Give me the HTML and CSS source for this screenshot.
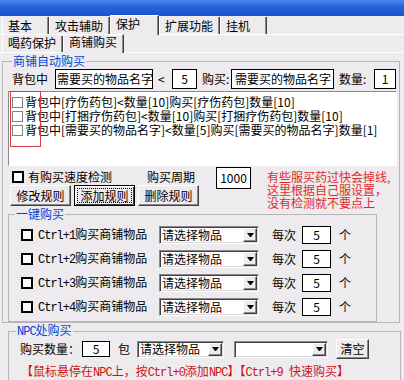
FILE: index.html
```html
<!DOCTYPE html>
<html>
  <head>
    <title>商铺购买</title>
    <link rel="stylesheet" href="styles.css">
  </head>
  <body>
    <div class="caption"></div>
    <div class="tabbar outer-tabs">
      <div class="tab">基本</div>
      <div class="tab">攻击辅助</div>
      <div class="tab active">保护</div>
      <div class="tab">扩展功能</div>
      <div class="tab">挂机</div>
    </div>
    <div class="page">
      <div class="tabbar inner-tabs">
        <div class="tab">喝药保护</div>
        <div class="tab active">商铺购买</div>
      </div>
      <div class="panel">
        <fieldset class="group shop-group">
          <legend>商铺自动购买</legend>
          <div class="rule-row">
            <span class="lbl-bag">背包中</span>
            <span class="field f-name">需要买的物品名字</span>
            <span class="lbl-lt">&lt;</span>
            <span class="field f-small center">5</span>
            <span class="lbl-buy">购买:</span>
            <span class="field f-name2">需要买的物品名字</span>
            <span class="lbl-num">数量:</span>
            <span class="field f-qty center">1</span>
          </div>
          <div class="rule-list">
            <div class="rule-item"><span class="check"></span>背包中[疗伤药包]&lt;数量[10]购买[疗伤药包]数量[10]</div>
            <div class="rule-item"><span class="check"></span>背包中[打捆疗伤药包]&lt;数量[10]购买[打捆疗伤药包]数量[10]</div>
            <div class="rule-item"><span class="check"></span>背包中[需要买的物品名字]&lt;数量[5]购买[需要买的物品名字]数量[1]</div>
            <div class="mark"></div>
          </div>
          <div class="opts">
            <div class="opts-left">
              <div class="speed-row">
                <span class="check bold"></span>
                <span class="speed-lbl">有购买速度检测</span>
                <span class="cycle-lbl">购买周期</span>
                <span class="field f-cycle center">1000</span>
              </div>
              <div class="btn-row">
                <button class="btn">修改规则</button>
                <button class="btn default">添加规则</button>
                <button class="btn">删除规则</button>
              </div>
            </div>
            <div class="warn">有些服买药过快会掉线,<br>这里根据自己服设置，<br>没有检测就不要点上</div>
          </div>
          <fieldset class="group quick-group">
            <legend>一键购买</legend>
            <div class="quick-row">
              <span class="check bold"></span>
              <span class="quick-lbl"><span class="en">Ctrl+1</span>购买商铺物品</span>
              <div class="combo q-combo"><span class="combo-text">请选择物品</span><span class="combo-arrow"></span></div>
              <span class="each-lbl">每次</span>
              <span class="field f-each center">5</span>
              <span class="unit">个</span>
            </div>
            <div class="quick-row">
              <span class="check bold"></span>
              <span class="quick-lbl"><span class="en">Ctrl+2</span>购买商铺物品</span>
              <div class="combo q-combo"><span class="combo-text">请选择物品</span><span class="combo-arrow"></span></div>
              <span class="each-lbl">每次</span>
              <span class="field f-each center">5</span>
              <span class="unit">个</span>
            </div>
            <div class="quick-row">
              <span class="check bold"></span>
              <span class="quick-lbl"><span class="en">Ctrl+3</span>购买商铺物品</span>
              <div class="combo q-combo"><span class="combo-text">请选择物品</span><span class="combo-arrow"></span></div>
              <span class="each-lbl">每次</span>
              <span class="field f-each center">5</span>
              <span class="unit">个</span>
            </div>
            <div class="quick-row">
              <span class="check bold"></span>
              <span class="quick-lbl"><span class="en">Ctrl+4</span>购买商铺物品</span>
              <div class="combo q-combo"><span class="combo-text">请选择物品</span><span class="combo-arrow"></span></div>
              <span class="each-lbl">每次</span>
              <span class="field f-each center">5</span>
              <span class="unit">个</span>
            </div>
          </fieldset>
        </fieldset>
        <fieldset class="group npc-group">
          <legend><span class="en">NPC</span>处购买</legend>
          <div class="npc-row">
            <span class="npc-lbl">购买数量：</span>
            <span class="field f-npc center">5</span>
            <span class="pack">包</span>
            <div class="combo npc-combo"><span class="combo-text">请选择物品</span><span class="combo-arrow"></span></div>
            <div class="combo npc-combo2"><span class="combo-text"></span><span class="combo-arrow"></span></div>
            <button class="btn btn-clear">清空</button>
          </div>
          <div class="tip">【鼠标悬停在<span class="en">NPC</span>上，按<span class="en">Ctrl+0</span>添加<span class="en">NPC</span>】【<span class="en">Ctrl+9 </span>快速购买】</div>
        </fieldset>
      </div>
    </div>
  </body>
</html>
```

FILE: styles.css
```css
* {
  box-sizing: border-box;
}
body {
  margin: 0;
  width: 404px;
  height: 380px;
  overflow: hidden;
  background-color: #eeebee;
  color: #000;
  font-family: "Noto Sans CJK SC", sans-serif;
  font-size: 12px;
  line-height: 14px;
}
.en {
  font-family: "Liberation Mono", monospace;
  font-size: 12px;
  letter-spacing: -1px;
}
.caption {
  height: 16px;
  background: linear-gradient(#4687ee, #2462d8 45%, #1b54c8);
}

/* tabs */
.tabbar {
  display: flex;
  align-items: flex-end;
  padding-left: 2px;
}
.outer-tabs {
  height: 18px;
}
.inner-tabs {
  height: 17px;
}
.tab {
  min-width: 47px;
  padding: 0 6px 0 5px;
  border-left: 1px solid #fff;
  border-right: 1px solid #404040;
  box-shadow: inset -1px 0 0 #8c888c;
  white-space: nowrap;
}
.outer-tabs .tab {
  height: 17px;
  line-height: 17px;
}
.inner-tabs .tab {
  height: 16px;
  line-height: 14px;
}
.tab.active {
  position: relative;
  z-index: 1;
  margin-bottom: -1px;
  border-top: 1px solid #fff;
  background-color: #eeebee;
}
.outer-tabs .tab.active {
  height: 20px;
  line-height: 15px;
  min-width: 49px;
}
.inner-tabs .tab.active {
  height: 19px;
  line-height: 13px;
}
.page {
  border-top: 1px solid #fff;
}
.panel {
  border-top: 1px solid #fff;
  padding-top: 1px;
}

/* group boxes */
.group {
  margin: 0;
  padding: 0;
  min-width: 0;
  border: 1px solid #b8b4b8;
}
.group legend {
  padding: 0 1px;
  line-height: 14px;
  color: #0046d5;
}
.shop-group {
  margin-left: 2px;
  width: 398px;
}
.shop-group > legend {
  margin-left: 9px;
}

/* inputs */
.field {
  display: flex;
  align-items: center;
  flex: none;
  height: 20px;
  padding-left: 1px;
  border: 1px solid #000;
  background-color: #fff;
  white-space: nowrap;
}
.field.center {
  justify-content: center;
  padding-left: 0;
}
.check {
  flex: none;
  width: 11px;
  height: 11px;
  border: 1px solid #808080;
  background-color: #fff;
}
.check.bold {
  width: 12px;
  height: 12px;
  border: 2px solid #000;
}
.combo {
  display: flex;
  align-items: center;
  flex: none;
  height: 18px;
  padding: 0 1px;
  background-color: #fff;
  border: 1px solid;
  border-color: #8c888c #fff #fff #8c888c;
  box-shadow: inset 1px 1px 0 #404040, inset -1px -1px 0 #dedade;
}
.combo-text {
  flex: 1;
  padding-left: 1px;
  white-space: nowrap;
}
.combo-arrow {
  display: flex;
  align-items: center;
  justify-content: center;
  flex: none;
  width: 14px;
  height: 14px;
  background-color: #eeebee;
  border: 1px solid;
  border-color: #fff #404040 #404040 #fff;
  box-shadow: inset -1px -1px 0 #8c888c;
}
.combo-arrow::after {
  content: "";
  width: 1px;
  border-top: 4px solid #000;
  border-left: 3px solid transparent;
  border-right: 3px solid transparent;
}
.btn {
  flex: none;
  height: 21px;
  width: 61px;
  padding: 0;
  font: inherit;
  color: #000;
  background-color: #eeebee;
  border: 1px solid;
  border-color: #fff #404040 #404040 #fff;
  box-shadow: inset -1px -1px 0 #8c888c;
}
.btn.default {
  border-color: #000;
  box-shadow: inset 1px 1px 0 #fff, inset -1px -1px 0 #404040;
  outline: 1px dotted #000;
  outline-offset: -4px;
}

/* shop rules */
.rule-row {
  display: flex;
  align-items: center;
  height: 20px;
  margin-top: 1px;
  padding-left: 9px;
}
.lbl-bag {
  flex: none;
  width: 43px;
}
.f-name {
  width: 98px;
}
.lbl-lt {
  flex: none;
  width: 19px;
  padding-left: 5px;
}
.f-small {
  width: 25px;
}
.lbl-buy {
  flex: none;
  width: 34px;
  padding-left: 5px;
}
.f-name2 {
  width: 103px;
  padding-left: 3px;
}
.lbl-num {
  flex: none;
  width: 40px;
  padding-left: 5px;
}
.f-qty {
  width: 22px;
}
.rule-list {
  position: relative;
  margin: 2px 0 0 5px;
  width: 389px;
  height: 75px;
  padding: 3px 0 0 3px;
  background-color: #fff;
  border: 1px solid;
  border-color: #8c888c #fff #fff #8c888c;
}
.rule-item {
  display: flex;
  align-items: center;
  height: 14px;
  white-space: nowrap;
}
.rule-item .check {
  margin-right: 2px;
}
.mark {
  position: absolute;
  left: 1px;
  top: -1px;
  width: 31px;
  height: 56px;
  border: 1px solid #d23c3c;
}
.opts {
  display: flex;
  height: 41px;
}
.opts-left {
  flex: none;
  width: 264px;
}
.speed-row {
  display: flex;
  align-items: center;
  height: 17px;
  margin-top: 2px;
  padding-left: 9px;
}
.speed-lbl {
  margin-left: 4px;
}
.cycle-lbl {
  margin-left: 35px;
}
.f-cycle {
  align-self: flex-start;
  margin: -1px 0 0 21px;
  width: 35px;
  height: 22px;
}
.btn-row {
  display: flex;
  gap: 3px;
  padding-left: 7px;
}
.warn {
  margin-top: 4px;
  line-height: 13px;
  color: #e02a2a;
  white-space: nowrap;
}

/* quick buy */
.quick-group {
  margin-left: 5px;
  width: 369px;
  padding-bottom: 4px;
}
.quick-group > legend {
  margin-left: 6px;
}
.quick-row {
  display: flex;
  align-items: center;
  height: 20px;
  margin-top: 4px;
  padding-left: 12px;
}
.quick-lbl {
  flex: none;
  width: 121px;
  margin-left: 5px;
  white-space: nowrap;
}
.q-combo {
  width: 100px;
}
.each-lbl {
  margin-left: 13px;
}
.f-each {
  margin-left: 6px;
  width: 29px;
  height: 18px;
}
.unit {
  margin-left: 8px;
}

/* npc buy */
.npc-group {
  margin-left: 8px;
  width: 393px;
  padding-bottom: 10px;
}
.npc-group > legend {
  margin-left: 7px;
}
.npc-row {
  display: flex;
  align-items: center;
  height: 20px;
  padding-left: 11px;
}
.npc-lbl {
  flex: none;
  width: 60px;
}
.f-npc {
  margin-left: 2px;
  width: 28px;
  height: 16px;
}
.pack {
  margin-left: 8px;
}
.npc-combo {
  margin-left: 7px;
  width: 87px;
  height: 17px;
}
.npc-combo2 {
  margin-left: 10px;
  width: 94px;
  height: 17px;
}
.npc-combo .combo-arrow,
.npc-combo2 .combo-arrow {
  height: 13px;
}
.btn-clear {
  margin-left: 8px;
  width: 33px;
  height: 20px;
}
.tip {
  margin-top: 5px;
  padding-left: 12px;
  color: #cc1414;
  white-space: nowrap;
}
```
